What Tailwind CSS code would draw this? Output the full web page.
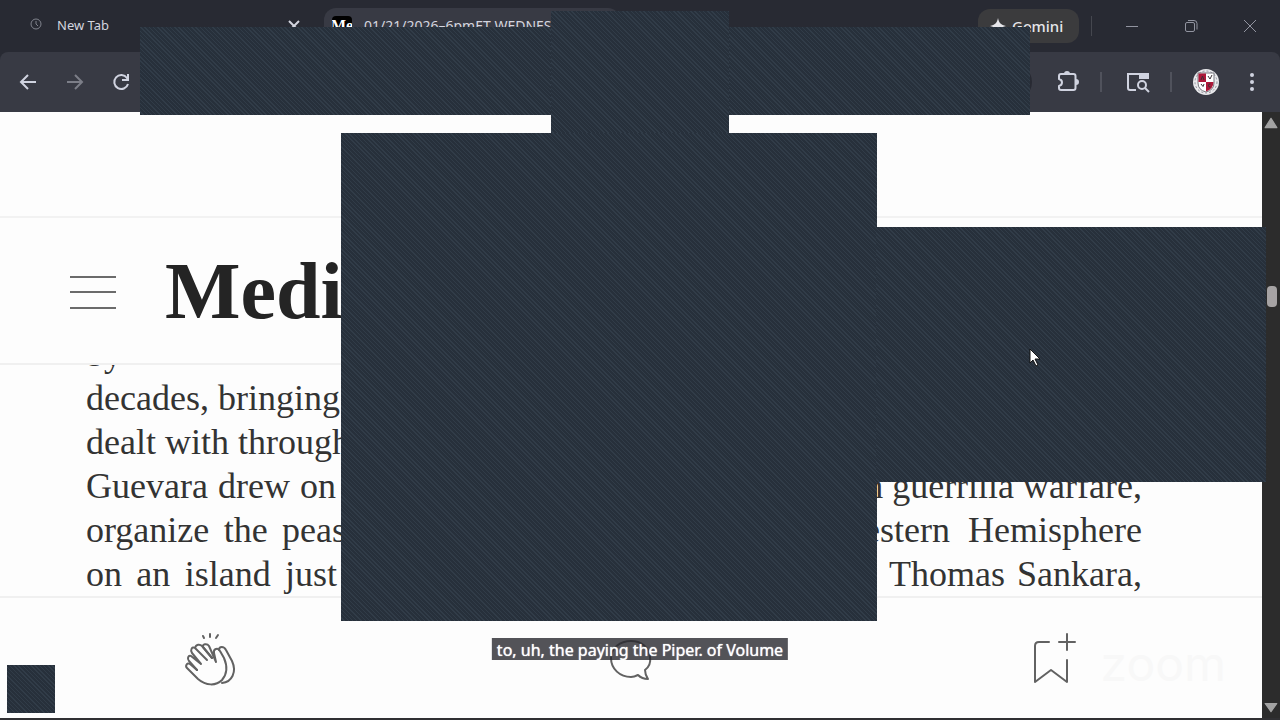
<!DOCTYPE html>
<html lang="en">

<head>
    <meta charset="UTF-8">
    <meta name="viewport" content="width=device-width, initial-scale=1.0">
    <script src="https://cdn.jsdelivr.net/npm/@tailwindcss/browser@4"></script>
    <title>Medium</title>
</head>

<body class="relative flex h-screen flex-col overflow-hidden bg-[#282a33] font-['Noto_Sans',sans-serif] text-[#d3d5df]">
    <!-- Tab strip -->
    <header class="flex h-13 shrink-0 items-center">
        <div class="flex w-80 shrink-0 items-center pl-7">
            <svg class="mb-1 size-4 text-[#80838d]" viewBox="0 0 16 16" fill="none" stroke="currentColor">
                <circle cx="8" cy="8" r="5" />
                <path d="M8 5v3l2 2" />
            </svg>
            <span class="ml-[13px] text-[13px]">New Tab</span>
            <button aria-label="Close tab" class="ml-auto mr-5">
                <svg class="size-3" viewBox="0 0 12 12" fill="none" stroke="currentColor" stroke-width="2">
                    <path d="M1 1l10 10M11 1L1 11" />
                </svg>
            </button>
        </div>
        <div class="mt-2 ml-1 flex h-11 w-[296px] shrink-0 items-start gap-3 self-start overflow-hidden rounded-t-xl bg-[#383a44] pt-2 pl-2">
            <span class="flex h-5 w-5 shrink-0 items-center justify-center overflow-hidden rounded-sm bg-black font-['Liberation_Serif',serif] text-base font-bold text-white">Me</span>
            <span class="whitespace-nowrap text-sm">01/21/2026–6pmET WEDNESDAY</span>
        </div>
        <div class="ml-auto flex items-center">
            <button class="flex h-[34px] w-[101px] items-center gap-1.5 rounded-xl bg-[#3b3b3d] pl-3 text-[15px] font-medium text-[#e6e6ea]">
                <svg class="size-4" viewBox="0 0 16 16" fill="currentColor">
                    <path d="M8 0C9 5 11 7 16 8C11 9 9 11 8 16C7 11 5 9 0 8C5 7 7 5 8 0Z" />
                </svg>
                <span>Gemini</span>
            </button>
            <span class="ml-3 h-5 w-px bg-[#45474f]"></span>
            <div class="ml-8 mr-[22px] flex gap-[43px] text-[#9294a0]">
                <button aria-label="Minimize">
                    <svg class="size-4" viewBox="0 0 16 16" fill="none" stroke="currentColor"><path d="M2 8.500h12" /></svg>
                </button>
                <button aria-label="Restore">
                    <svg class="size-4" viewBox="0 0 16 16" fill="none" stroke="currentColor">
                        <rect x="2.500" y="4.500" width="9" height="9" rx="1.500" />
                        <path d="M5 2.500h6a3 3 0 0 1 3 3v6" />
                    </svg>
                </button>
                <button aria-label="Close">
                    <svg class="size-4" viewBox="0 0 16 16" fill="none" stroke="currentColor"><path d="M2 2l12 12M14 2L2 14" /></svg>
                </button>
            </div>
        </div>
    </header>

    <!-- Toolbar -->
    <nav class="flex h-15 shrink-0 items-center rounded-t-lg bg-[#383a44] pl-4 text-[#d0d3e0]">
        <div class="flex gap-[22px]">
            <button aria-label="Back">
                <svg class="size-6" viewBox="0 0 24 24" fill="none" stroke="currentColor" stroke-width="2"><path d="M20 12H6M12 5l-7 7 7 7" /></svg>
            </button>
            <button aria-label="Forward" class="text-[#7c7e88]">
                <svg class="size-6" viewBox="0 0 24 24" fill="none" stroke="currentColor" stroke-width="2"><path d="M5 12h14M13 5l7 7-7 7" /></svg>
            </button>
            <button aria-label="Reload">
                <svg class="size-6" viewBox="0 0 24 24" fill="none" stroke="currentColor" stroke-width="2"><path d="M20 14a7 7 0 1 1-1-6l1 2M20 4v6h-6" /></svg>
            </button>
        </div>
        <input type="text" aria-label="Address" class="ml-4 mr-6 h-9 min-w-0 flex-1 rounded-full bg-[#282a33]">
        <div class="flex items-center">
            <button aria-label="Extensions">
                <svg class="size-6" viewBox="0 0 24 24" fill="none" stroke="currentColor" stroke-width="2">
                    <path d="M5 4h12.500a2 2 0 0 1 2 2v12a2 2 0 0 1-2 2H5a2 2 0 0 1-2-2v-2c4-1 4-6 0-7V6a2 2 0 0 1 2-2z" stroke-linejoin="round" />
                    <path d="M9 4a2 2 0 0 1 4 0M20 10a2 2 0 0 1 0 4" fill="currentColor" />
                </svg>
            </button>
            <span class="ml-5 h-5 w-0.5 bg-[#50525c]"></span>
            <button aria-label="Search tabs" class="ml-6">
                <svg class="size-6" viewBox="0 0 24 24" fill="none" stroke="currentColor" stroke-width="2">
                    <path d="M10 20H4a2 2 0 0 1-2-2V4h20v5" />
                    <path d="M13 3h9v6h-9z" fill="currentColor" stroke="none" />
                    <circle cx="16" cy="15" r="4" />
                    <path d="M19 18l4 4" />
                </svg>
            </button>
            <span class="ml-5 h-5 w-0.5 bg-[#50525c]"></span>
            <button aria-label="Profile" class="ml-5">
                <svg class="size-7" viewBox="0 0 28 28">
                    <circle cx="14" cy="14" r="13" fill="#e9e9ec" />
                    <circle cx="14" cy="14" r="11" fill="none" stroke="#8d8f99" stroke-dasharray="2 2" />
                    <path d="M6 5h16v10q0 7-8 9q-8-2-8-9z" fill="#fff" stroke="#77777f" />
                    <path d="M6.500 5.500H14V14H6.500z" fill="#ad1839" />
                    <path d="M14 14h7.500q0 7-7.500 9.500z" fill="#ad1839" />
                    <path d="M9 12l1.500-4 1.500 4M16 8l2 3 2-4M9 16l2 2.500 1-2.500M18.500 16q-2-.5-2 1.500t2 1.500" fill="none" stroke="#3a3036" />
                </svg>
            </button>
            <button aria-label="Menu" class="ml-5 mr-4">
                <svg class="size-6" viewBox="0 0 24 24" fill="currentColor">
                    <circle cx="12" cy="5" r="2" /><circle cx="12" cy="12" r="2" /><circle cx="12" cy="19" r="2" />
                </svg>
            </button>
        </div>
    </nav>

    <!-- Page -->
    <div class="flex min-h-0 flex-1 border-b-2 border-[#303033] bg-[#fdfdfd]">
        <main class="flex min-w-0 flex-1 flex-col">
            <div class="h-[106px] shrink-0 border-b-2 border-[#f2f2f2]"></div>
            <div class="flex h-[147px] shrink-0 items-center border-b-2 border-[#f0f0f0] pl-[69px]">
                <button aria-label="Open menu" class="text-[#6b6b6b]">
                    <svg class="h-12 w-12" viewBox="0 0 48 48" fill="none" stroke="currentColor" stroke-width="2"><path d="M1 10h46M1 25h46M1 41h46" /></svg>
                </button>
                <a href="#" class="ml-12 font-['Liberation_Serif',serif] text-[80px] leading-none font-bold text-[#242424]">Medium</a>
            </div>
            <article class="flex min-h-0 flex-1 flex-col justify-end overflow-hidden pr-[120px] pl-[86px] font-['Liberation_Serif',serif] text-4xl leading-11 text-[#333]">
                <p class="flex h-11 shrink-0 justify-between whitespace-nowrap"><span>by</span></p>
                <p class="flex h-11 shrink-0 justify-between whitespace-nowrap"><span>decades, bringing</span></p>
                <p class="flex h-11 shrink-0 justify-between whitespace-nowrap"><span>dealt with through</span></p>
                <p class="flex h-11 shrink-0 justify-between whitespace-nowrap"><span class="w-[250px] [text-align-last:justify]">Guevara drew on</span><span>on guerrilla warfare,</span></p>
                <p class="flex h-11 shrink-0 justify-between whitespace-nowrap"><span class="w-[318px] [text-align-last:justify]">organize the peasants</span><span>Western&nbsp; Hemisphere</span></p>
                <p class="flex h-11 shrink-0 justify-between whitespace-nowrap"><span class="w-[251px] [text-align-last:justify]">on an island just</span><span class="w-[253px] [text-align-last:justify]">Thomas Sankara,</span></p>
            </article>
            <div class="flex h-[122px] shrink-0 items-center justify-between border-t-2 border-[#f0f0f0] px-[182px] text-[#626262]">
                <button aria-label="Clap">
                    <svg class="size-14" viewBox="0 0 56 56" fill="none" stroke="currentColor" stroke-width="2" stroke-linecap="round" stroke-linejoin="round">
                        <path d="M15 40L8 34c-3-2-5 2-3 4l11 11c8 7 18 7 24 1 6-7 5-15 2-22l-4-7c-2-4-7-2-6 2l2 9L27 16c-2-3-7-2-6 1l9 11" />
                        <path d="M19 34L9 26c-3-1-4 3-2 5l8 9M25 30L13 18c-3-2-5 2-3 5l9 11M13 18c1-4 5-4 7-2l10 12" />
                        <path d="M37 20c0-4 5-4 7 0l6 11c5 11 0 21-10 22" />
                        <path d="M21 6l1 2M28 4v3M36 5l-2 3" />
                    </svg>
                </button>
                <button aria-label="Comments">
                    <svg class="mt-1 size-12" viewBox="0 0 48 48" fill="none" stroke="currentColor" stroke-width="2" stroke-linejoin="round">
                        <path d="M38 34C42 31 44 27 43 21C42 11 34 5 24 5C13 5 4 12 4 22c0 11 9 19 20 19 3 0 5-1 7-2 3 3 6 4 10 4-2-3-3-5-3-9z" />
                    </svg>
                </button>
                <button aria-label="Save">
                    <svg class="size-14" viewBox="0 0 56 56" fill="none" stroke="currentColor" stroke-width="2" stroke-linecap="round" stroke-linejoin="round">
                        <path d="M25 12H15q-4 0-4 4v36l16-12 16 12V30M43 4v16M35 12h16" />
                    </svg>
                </button>
            </div>
        </main>
        <!-- Scrollbar -->
        <aside class="flex w-[18px] shrink-0 flex-col items-center bg-[#2c2c2c] py-1 text-[#a3a3a3]">
            <svg class="size-3.5 shrink-0" viewBox="0 0 12 12" fill="currentColor"><path d="M6 2l5 8H1z" stroke="currentColor" stroke-linejoin="round" /></svg>
            <span class="mt-[156px] ml-0.5 h-[21px] w-2.5 shrink-0 rounded-sm bg-[#a6a3a4]"></span>
            <svg class="mt-auto size-3.5 shrink-0" viewBox="0 0 12 12" fill="currentColor"><path d="M1 3h10L6 10z" stroke="currentColor" stroke-linejoin="round" /></svg>
        </aside>
    </div>

    <!-- Floating windows -->
    <div class="absolute left-[140px] top-[27px] h-[88px] w-[890px] bg-[repeating-linear-gradient(45deg,#27303b_0px,#27303b_2px,#313c48_2px,#313c48_3px)]"></div>
    <div class="absolute left-[551px] top-[11px] h-[123px] w-[178px] bg-[repeating-linear-gradient(45deg,#27303b_0px,#27303b_2px,#313c48_2px,#313c48_3px)]"></div>
    <div class="absolute left-[341px] top-[133px] h-[488px] w-[536px] bg-[repeating-linear-gradient(45deg,#27303b_0px,#27303b_2px,#313c48_2px,#313c48_3px)]"></div>
    <div class="absolute left-[876px] top-[227px] h-[255px] w-[390px] bg-[repeating-linear-gradient(45deg,#27303b_0px,#27303b_2px,#313c48_2px,#313c48_3px)]"></div>
    <div class="absolute left-[7px] top-[665px] h-12 w-12 bg-[repeating-linear-gradient(45deg,#27303b_0px,#27303b_2px,#313c48_2px,#313c48_3px)]"></div>

    <!-- Caption and watermark -->
    <p class="absolute bottom-[60px] left-1/2 h-[22px] -translate-x-1/2 whitespace-nowrap bg-[#28282e]/80 px-[5px] text-base leading-6 text-white text-shadow-[0_0_1px_#fff]">to, uh, the paying the Piper. of Volume</p>
    <span class="absolute right-[54px] bottom-8 font-['Inter',sans-serif] text-5xl leading-none text-[#f8f8f8]">zoom</span>

    <!-- Pointer -->
    <svg class="absolute left-[1029px] top-[348px] h-5 w-3" viewBox="0 0 12 20" fill="#fff" stroke="#111">
        <path d="M1 1v14l3-3 3 6 2-1-3-6h5z" />
    </svg>
</body>

</html>
